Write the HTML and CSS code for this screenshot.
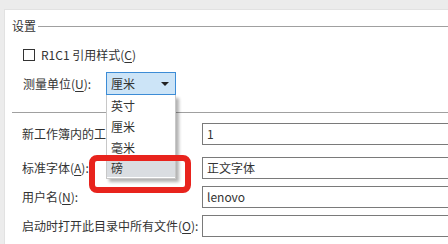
FILE: index.html
```html
<!DOCTYPE html>
<html lang="zh-CN">
  <head>
    <meta charset="UTF-8" />
    <title>设置</title>
    <link rel="stylesheet" href="styles.css">
  </head>
  <body>
    <div class="panel">
      <div class="legend"><span>设置</span></div>

      <div class="check-row">
        <span class="box"></span>
        <span>R1C1 引用样式(<u>C</u>)</span>
      </div>

      <div class="unit-row">
        <span class="label">测量单位(<u>U</u>):</span>
        <div class="combo">
          <span>厘米</span>
          <span class="arrow"></span>
          <ul class="menu">
            <li>英寸</li>
            <li>厘米</li>
            <li>毫米</li>
            <li class="hover">磅</li>
          </ul>
        </div>
      </div>

      <div class="rule"></div>

      <div class="field first">
        <span class="label">新工作簿内的工作表数(<u>S</u>):</span>
        <div class="input">1</div>
      </div>
      <div class="field second">
        <span class="label">标准字体(<u>A</u>):</span>
        <div class="input">正文字体</div>
      </div>
      <div class="field">
        <span class="label">用户名(<u>N</u>):</span>
        <div class="input">lenovo</div>
      </div>
      <div class="field">
        <span class="label">启动时打开此目录中所有文件(<u>O</u>):</span>
        <div class="input"></div>
      </div>
    </div>

    <div class="mark"></div>
  </body>
</html>
```

FILE: styles.css
```css
body {
  margin: 0;
  background-color: #ececec;
  color: #333;
  font-family: "Noto Sans CJK SC", "Noto Sans", sans-serif;
  font-size: 12px;
  line-height: 16px;
  overflow: hidden;
  height: 244px;
  position: relative;
}

.panel {
  margin: 9px 0 0 4px;
  height: 235px;
  background: #fff;
  border-top: 1px solid #e2e2e2;
  border-left: 1px solid #e2e2e2;
  box-sizing: border-box;
  overflow: hidden;
}

u {
  text-decoration: underline;
  text-underline-offset: 2px;
}

.legend {
  display: flex;
  align-items: center;
  padding: 8px 0 0 7px;
}

.legend::after {
  content: "";
  flex: 1;
  height: 1px;
  margin-left: 2px;
  background: #a0a0a0;
}

.check-row {
  display: flex;
  align-items: center;
  gap: 6px;
  margin-top: 13px;
  padding-left: 18px;
}

.box {
  width: 12px;
  height: 12px;
  border: 1px solid #333;
  box-sizing: border-box;
}

.unit-row {
  display: flex;
  align-items: center;
  margin-top: 9px;
  padding-left: 18px;
}

.unit-row .label {
  width: 83px;
  flex-shrink: 0;
}

.combo {
  position: relative;
  width: 70px;
  height: 23px;
  display: flex;
  align-items: center;
  justify-content: space-between;
  padding: 0 6px 0 4px;
  box-sizing: border-box;
  background: #cce4f7;
  border: 1px solid #3c8cd6;
}

.arrow {
  width: 0;
  height: 0;
  border-left: 4px solid transparent;
  border-right: 4px solid transparent;
  border-top: 4px solid #222;
}

.menu {
  position: absolute;
  top: 22px;
  left: -1px;
  width: 70px;
  margin: 0;
  padding: 0;
  list-style: none;
  background: #fff;
  border: 1px solid #c8c8c8;
  border-top: none;
  box-sizing: border-box;
  box-shadow: 3px 3px 3px rgba(0, 0, 0, 0.3);
  z-index: 5;
}

.menu li {
  height: 21px;
  line-height: 21px;
  padding-left: 4px;
}

.menu li.hover {
  background: #dadde1;
  margin: 1px 0;
  height: 18px;
  line-height: 18px;
}

.rule {
  height: 1px;
  margin: 17px 0 0 7px;
  background: #a0a0a0;
}

.field {
  display: flex;
  align-items: center;
  margin-top: 7px;
  padding-left: 17px;
}

.field.first {
  margin-top: 10px;
}

.field.second {
  margin-top: 12px;
}

.field .label {
  width: 180px;
  flex-shrink: 0;
  white-space: nowrap;
  overflow: hidden;
}

.input {
  width: 270px;
  height: 22px;
  line-height: 20px;
  padding-left: 4px;
  box-sizing: border-box;
  border: 1px solid #7a7a7a;
  flex-shrink: 0;
}

.mark {
  position: absolute;
  left: 89px;
  top: 155px;
  width: 102px;
  height: 38px;
  box-sizing: border-box;
  border: 6px solid #e8231d;
  border-radius: 8px;
  z-index: 10;
}
```
